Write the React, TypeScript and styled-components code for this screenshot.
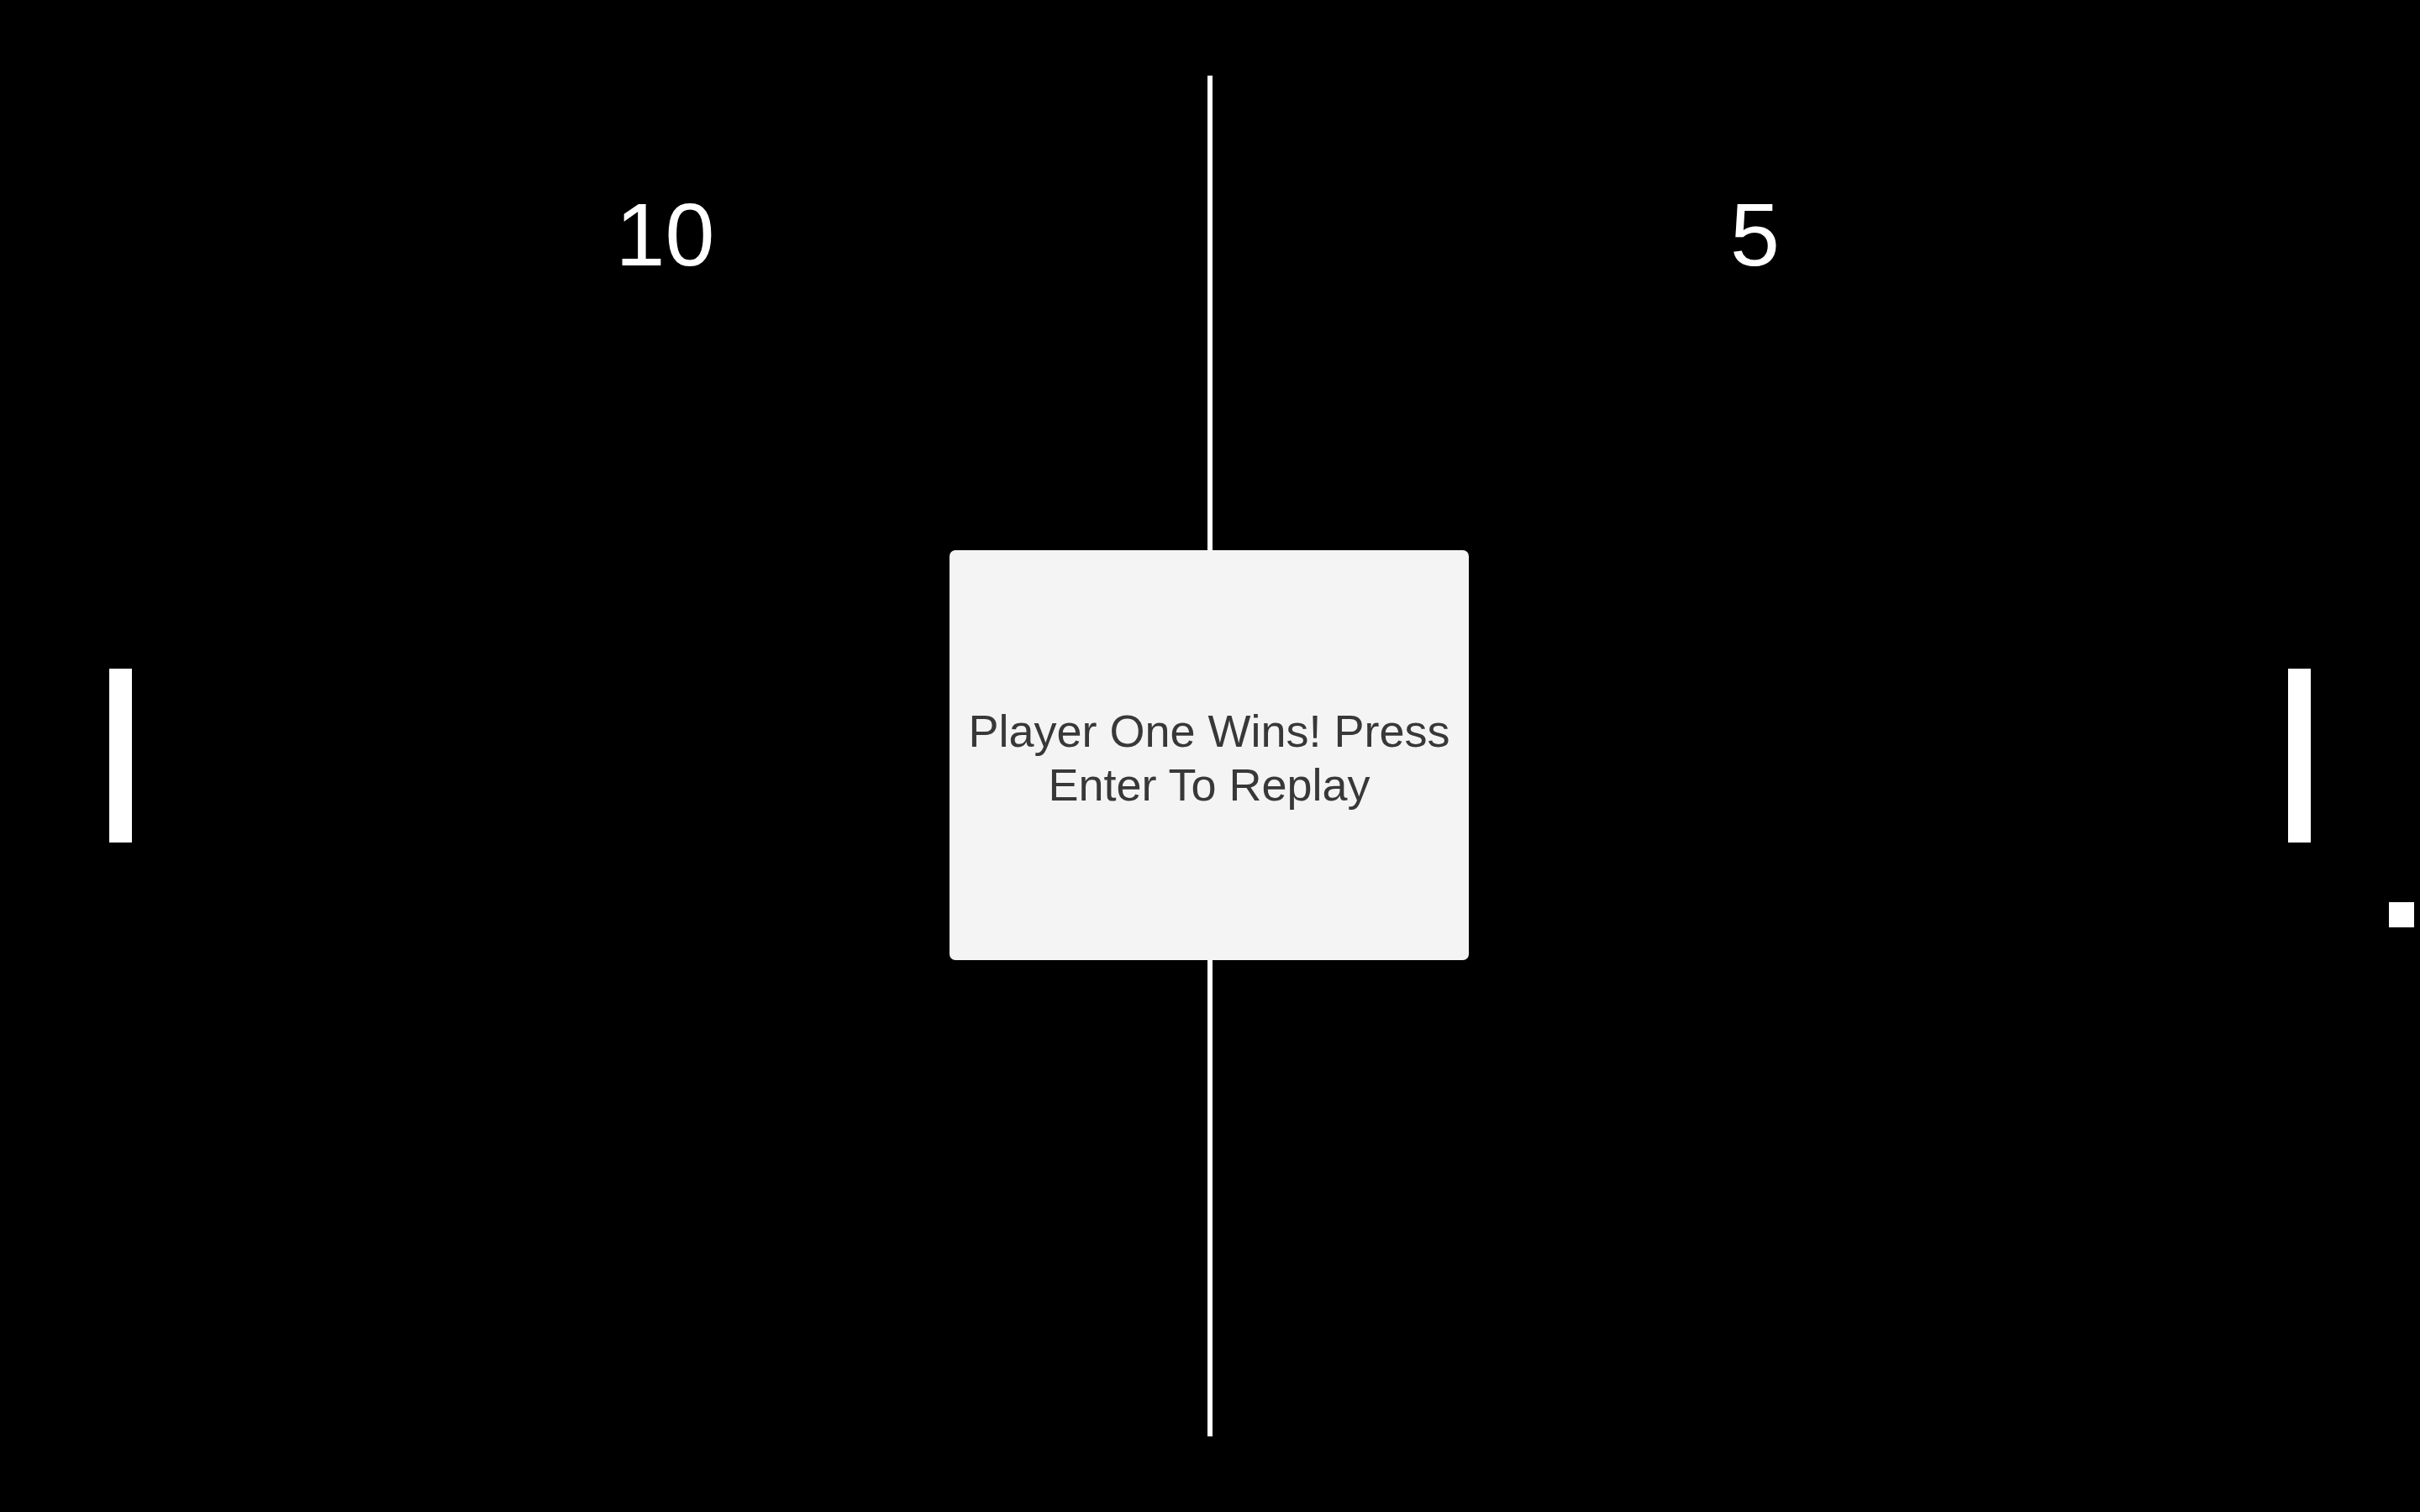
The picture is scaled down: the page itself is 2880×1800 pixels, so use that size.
import React from "react";
import styled, { createGlobalStyle } from "styled-components";

const GlobalStyle = createGlobalStyle`
  html, body {
    margin: 0;
    padding: 0;
    background: #000;
    overflow: hidden;
  }
  body {
    font-family: "Liberation Sans", Arial, sans-serif;
  }
`;

const Court = styled.div`
  position: relative;
  width: 100vw;
  height: 100vh;
  background: #000;
  overflow: hidden;
`;

/* the centre net, as its own flow layer */
const NetLayer = styled.div`
  position: absolute;
  inset: 0;
  display: flex;
  justify-content: center;
  padding: 90px 0;
  box-sizing: border-box;
`;

const Net = styled.div`
  width: 6px;
  margin-left: -1px;
  background: #fff;
`;

/* scoreboard: two fixed columns either side of the net */
const Scoreboard = styled.div`
  position: absolute;
  inset: 0 0 auto 0;
  display: grid;
  grid-template-columns: 200px 200px;
  column-gap: 1097px;
  justify-content: center;
  justify-items: center;
  padding-top: 226px;
`;

const Score = styled.div`
  font-family: "Liberation Sans", Arial, sans-serif;
  font-size: 106px;
  line-height: 1;
  color: #fff;
`;

/* game pieces live on a free canvas: their place is the game state */
const Paddle = styled.div<{ $x: number; $y: number }>`
  position: absolute;
  left: ${(p) => p.$x}px;
  top: ${(p) => p.$y}px;
  width: 27px;
  height: 207px;
  background: #fff;
`;

const Ball = styled.div<{ $x: number; $y: number }>`
  position: absolute;
  left: ${(p) => p.$x}px;
  top: ${(p) => p.$y}px;
  width: 30px;
  height: 30px;
  background: #fff;
`;

const Overlay = styled.div`
  position: absolute;
  inset: 0;
  display: flex;
  align-items: center;
  justify-content: center;
`;

const Dialog = styled.div`
  width: 618px;
  height: 488px;
  box-sizing: border-box;
  padding: 0 10px;
  margin-left: -2px;
  margin-top: -2px;
  background: #f4f4f4;
  border-radius: 7px;
  display: flex;
  align-items: center;
  justify-content: center;
  text-align: center;
  font-family: "Liberation Sans", Arial, sans-serif;
  font-size: 54px;
  line-height: 64px;
  color: #383838;
`;

const Message = styled.p`
  margin: 6px 0 0 0;
`;

export default function App() {
  const left = { x: 130, y: 796 };
  const right = { x: 2723, y: 796 };
  const ball = { x: 2843, y: 1074 };
  return (
    <>
      <GlobalStyle />
      <Court>
        <NetLayer>
          <Net />
        </NetLayer>
        <Scoreboard>
          <Score>10</Score>
          <Score>5</Score>
        </Scoreboard>
        <Paddle $x={left.x} $y={left.y} />
        <Paddle $x={right.x} $y={right.y} />
        <Ball $x={ball.x} $y={ball.y} />
        <Overlay>
          <Dialog>
            <Message>Player One Wins! Press Enter To Replay</Message>
          </Dialog>
        </Overlay>
      </Court>
    </>
  );
}
